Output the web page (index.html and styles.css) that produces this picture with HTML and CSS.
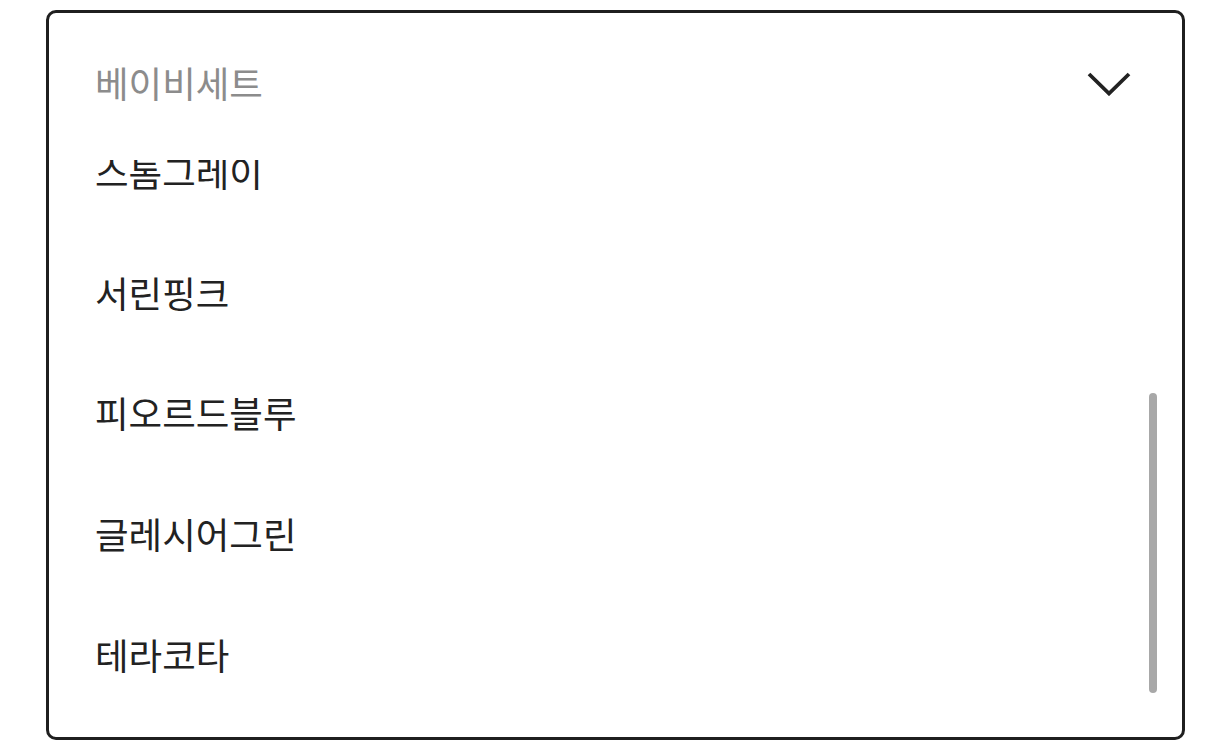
FILE: index.html
```html
<!DOCTYPE html>
<html lang="ko">
<head>
<meta charset="utf-8">
<title>Select</title>
<link rel="stylesheet" href="styles.css">
</head>
<body>
<div class="select">
  <div class="select-head">
    <span class="placeholder">베이비세트</span>
    <svg class="chevron" viewBox="0 0 44 24" width="44" height="24" aria-hidden="true">
      <polyline points="2,2 22,21.5 42,2" fill="none" stroke="#222" stroke-width="3.8" stroke-linecap="butt" stroke-linejoin="miter"/>
    </svg>
  </div>
  <div class="options" id="options">
    <div class="option">스톰그레이</div>
    <div class="option">서린핑크</div>
    <div class="option">피오르드블루</div>
    <div class="option">글레시어그린</div>
    <div class="option">테라코타</div>
  </div>
  <div class="scroll-thumb"></div>
</div>
<script src="script.js"></script>
</body>
</html>
```
FILE: styles.css
```css
html, body {
  margin: 0;
  padding: 0;
  background: #ffffff;
}
body {
  font-family: "Noto Sans CJK KR", "Noto Sans", sans-serif;
}
.select {
  position: relative;
  box-sizing: border-box;
  margin: 10px 47px 0 46px;
  height: 730px;
  border: 3px solid #1f1f1f;
  border-radius: 10px;
  display: flex;
  flex-direction: column;
  overflow: hidden;
}
.select-head {
  flex: none;
  height: 141px;
  display: flex;
  align-items: center;
  justify-content: space-between;
  padding: 0 51px 0 46px;
}
.placeholder {
  font-size: 36.5px;
  font-weight: 400;
  color: #8c8c8c;
  line-height: 1;
}
.chevron {
  display: block;
}
.options {
  flex: 1;
  margin-top: 6px;
  overflow-y: scroll;
  scrollbar-width: none;
  padding-bottom: 60px;
}
.options::-webkit-scrollbar {
  display: none;
}
.option {
  height: 120.67px;
  display: flex;
  align-items: center;
  padding-left: 46px;
  font-size: 36.5px;
  font-weight: 400;
  color: #222222;
  line-height: 1;
}
.scroll-thumb {
  position: absolute;
  right: 25px;
  top: 380px;
  width: 8px;
  height: 300px;
  border-radius: 4px;
  background: #a8a8a8;
}
```
FILE: script.js
```js
document.getElementById('options').scrollTop = 48;
```
